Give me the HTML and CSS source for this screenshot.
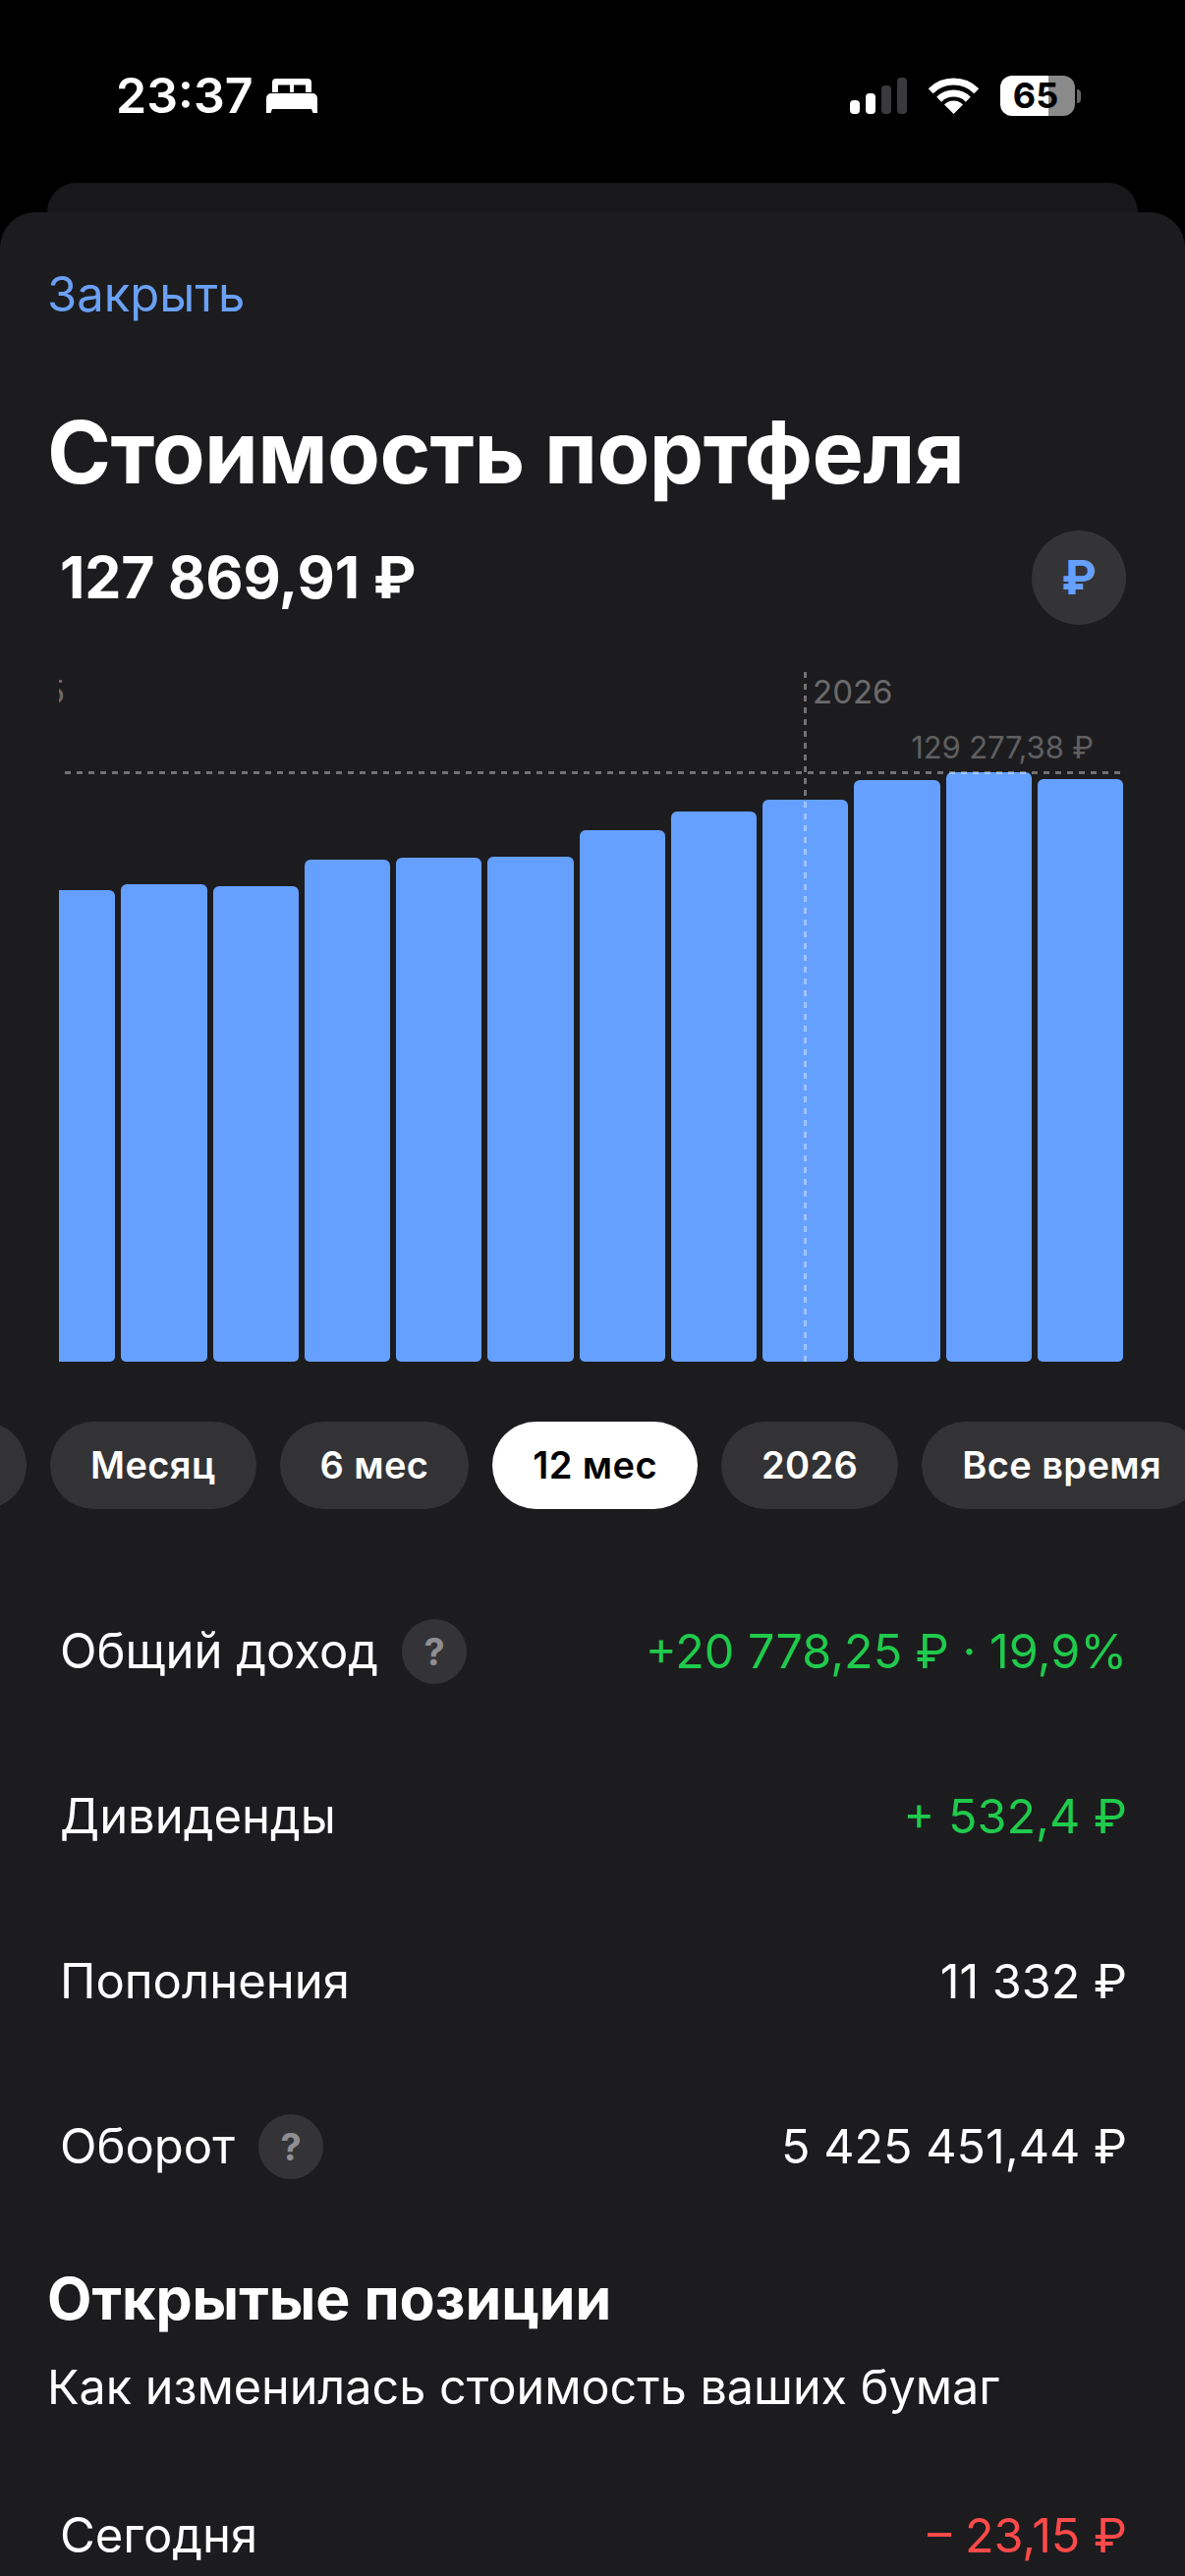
FILE: index.html
```html
<!DOCTYPE html>
<html lang="ru">
<head>
<meta charset="utf-8">
<title>Стоимость портфеля</title>
<link rel="stylesheet" href="styles.css">
</head>
<body>
<header class="status">
  <div class="status-left">
    <span class="time">23:37</span>
    <svg class="bed" viewBox="0 0 52 35"><path fill="#fff" fill-rule="evenodd" d="M10 0H42a4 4 0 0 1 4 4V14H6V4a4 4 0 0 1 4-4ZM12 6.500V14H24V6.500ZM28 6.500V14H40V6.500Z"/><path fill="#fff" d="M5 15H47a5 5 0 0 1 5 5V35H47.500L46 31H6L4.500 35H0V20a5 5 0 0 1 5-5Z"/></svg>
  </div>
  <div class="status-right">
    <div class="signal"><i class="sig s1"></i><i class="sig s2"></i><i class="sig s3"></i><i class="sig s4"></i></div>
    <svg class="wifi" viewBox="0 0 51 37"><g fill="none" stroke="#fff" stroke-width="7"><path d="M2.200 13.700A33 33 0 0 1 48.800 13.700"/><path d="M10.700 22.200A21 21 0 0 1 40.300 22.200"/></g><path fill="#fff" d="M25.500 37L16 27.500A13.400 13.400 0 0 1 35 27.500Z"/></svg>
    <div class="battery"><div class="battery-body">65</div><div class="battery-nub"></div></div>
  </div>
</header>
<div class="back-card"></div>
<main class="card">
  <div class="close">Закрыть</div>
  <h1 class="title">Стоимость портфеля</h1>
  <div class="amount-row">
    <span class="amount">127 869,91 ₽</span>
    <span class="currency">₽</span>
  </div>
  <div class="chart">
    <div class="bars">
      <div class="bar" style="height:480px"></div>
      <div class="bar" style="height:486px"></div>
      <div class="bar" style="height:484px"></div>
      <div class="bar" style="height:511px"></div>
      <div class="bar" style="height:513px"></div>
      <div class="bar" style="height:514px"></div>
      <div class="bar" style="height:541px"></div>
      <div class="bar" style="height:560px"></div>
      <div class="bar" style="height:572px"></div>
      <div class="bar" style="height:592px"></div>
      <div class="bar" style="height:600px"></div>
      <div class="bar" style="height:593px"></div>
    </div>
    <div class="hline"></div>
    <div class="vline"></div>
    <span class="year year-old">2025</span>
    <span class="year year-new">2026</span>
    <span class="max">129 277,38 ₽</span>
  </div>
  <nav class="pills">
    <span class="pill pill-cut"></span>
    <span class="pill">Месяц</span>
    <span class="pill">6 мес</span>
    <span class="pill pill-on">12 мес</span>
    <span class="pill">2026</span>
    <span class="pill">Все время</span>
  </nav>
  <section class="rows">
    <div class="row"><span class="label">Общий доход<span class="help">?</span></span><span class="green">+20 778,25 ₽ · 19,9%</span></div>
    <div class="row"><span class="label">Дивиденды</span><span class="green">+ 532,4 ₽</span></div>
    <div class="row"><span class="label">Пополнения</span><span>11 332 ₽</span></div>
    <div class="row"><span class="label">Оборот<span class="help">?</span></span><span>5 425 451,44 ₽</span></div>
  </section>
  <h2 class="sub">Открытые позиции</h2>
  <p class="desc">Как изменилась стоимость ваших бумаг</p>
  <div class="row row-last"><span class="label">Сегодня</span><span class="red">– 23,15 ₽</span></div>
</main>
</body>
</html>
```
FILE: styles.css
```css
* { box-sizing: border-box; }
html, body { margin: 0; padding: 0; }
body {
  width: 1206px;
  height: 2622px;
  overflow: hidden;
  background: #000;
  color: #fff;
  font-family: Inter, "Noto Sans", sans-serif;
}
.status {
  height: 186px;
  padding: 77px 106px 0 118px;
  display: flex;
  justify-content: space-between;
  align-items: flex-start;
}
.status-left { display: flex; align-items: center; gap: 13px; height: 41px; }
.time { font-size: 50px; font-weight: 600; line-height: 41px; }
.bed { width: 52px; height: 35px; display: block; }
.status-right { display: flex; align-items: center; gap: 22px; height: 41px; }
.signal { display: flex; align-items: flex-end; gap: 6px; height: 37px; }
.sig { display: block; width: 10px; border-radius: 4px; background: #3a3a3c; }
.s1 { height: 14px; background: #fff; }
.s2 { height: 21px; background: #fff; }
.s3 { height: 29px; }
.s4 { height: 37px; }
.wifi { width: 51px; height: 37px; display: block; }
.battery { display: flex; align-items: center; gap: 2px; }
.battery-body {
  width: 76px;
  height: 41px;
  padding-right: 4px;
  border-radius: 12px;
  background: linear-gradient(90deg, #fff 0 49px, #8a8a8a 49px);
  color: #000;
  font-size: 36px;
  font-weight: 700;
  line-height: 41px;
  text-align: center;
}
.battery-nub { width: 4px; height: 14px; border-radius: 0 4px 4px 0; background: #666; }
.back-card {
  height: 30px;
  margin: 0 48px;
  background: #18181a;
  border-radius: 30px 30px 0 0;
}
.card {
  height: 2406px;
  padding-top: 55px;
  background: #1c1c1e;
  border-radius: 36px 36px 0 0;
}
.close {
  margin-left: 48px;
  font-size: 49px;
  line-height: 58px;
  color: #6aa0f5;
}
.title {
  margin: 81px 0 0 48px;
  font-size: 88px;
  font-weight: 700;
  letter-spacing: -0.6px;
  line-height: 100px;
}
.amount-row {
  margin-top: 30px;
  padding: 0 60px 0 61px;
  height: 96px;
  display: flex;
  align-items: center;
  justify-content: space-between;
}
.amount { font-size: 59px; font-weight: 700; letter-spacing: -0.2px; line-height: 96px; }
.currency {
  width: 96px;
  height: 96px;
  border-radius: 50%;
  background: #343436;
  color: #66a0ff;
  font-size: 48px;
  font-weight: 700;
  line-height: 96px;
  text-align: center;
}
.chart {
  position: relative;
  margin: 48px 0 0 60px;
  width: 1083px;
  height: 702px;
  overflow: hidden;
}
.bars {
  height: 100%;
  margin-left: -30px;
  display: flex;
  align-items: flex-end;
  gap: 6px;
}
.bar {
  flex: 1;
  background: #66a0ff;
  border-radius: 6px 6px 5px 5px;
}
.hline {
  position: absolute;
  left: 6px;
  top: 101px;
  width: 1074px;
  height: 3px;
  background: repeating-linear-gradient(90deg, rgba(255,255,255,.38) 0 6px, transparent 6px 12px);
}
.vline {
  position: absolute;
  left: 758px;
  top: 0;
  width: 3px;
  height: 702px;
  background: repeating-linear-gradient(180deg, rgba(255,255,255,.38) 0 6px, transparent 6px 12px);
}
.year {
  position: absolute;
  top: 0;
  font-size: 33px;
  line-height: 40px;
  color: #6a6a6c;
}
.year-old { right: 1077px; }
.year-new { left: 767px; }
.max {
  position: absolute;
  right: 30px;
  top: 59px;
  font-size: 31px;
  letter-spacing: -0.1px;
  line-height: 36px;
  color: #5f5f61;
}
.pills {
  margin-top: 61px;
  display: flex;
  gap: 24px;
  height: 89px;
  overflow: hidden;
}
.pill {
  flex: none;
  height: 89px;
  padding: 0 41px;
  border-radius: 45px;
  background: #333335;
  font-size: 38px;
  font-weight: 600;
  letter-spacing: 0.4px;
  line-height: 89px;
  white-space: nowrap;
}
.pill-cut { width: 180px; margin-left: -153px; }
.pill-on { background: #fff; color: #000; }
.rows { margin-top: 61px; }
.row {
  height: 168px;
  padding: 0 59px 0 61px;
  display: flex;
  align-items: center;
  justify-content: space-between;
  font-size: 48.500px;
  line-height: 60px;
  white-space: nowrap;
}
.label { display: flex; align-items: center; gap: 24px; font-size: 49px; }
.help {
  width: 66px;
  height: 66px;
  border-radius: 50%;
  background: #343436;
  color: #8e8e93;
  font-size: 38px;
  font-weight: 700;
  line-height: 66px;
  text-align: center;
}
.green { color: #1fca4c; }
.red { color: #ff4a4a; }
.sub {
  margin: 41px 0 0 48px;
  font-size: 59px;
  font-weight: 700;
  line-height: 60px;
}
.desc {
  margin: 30px 0 0 48px;
  font-size: 48.500px;
  line-height: 60px;
}
.row-last { margin-top: 37px; }
```
